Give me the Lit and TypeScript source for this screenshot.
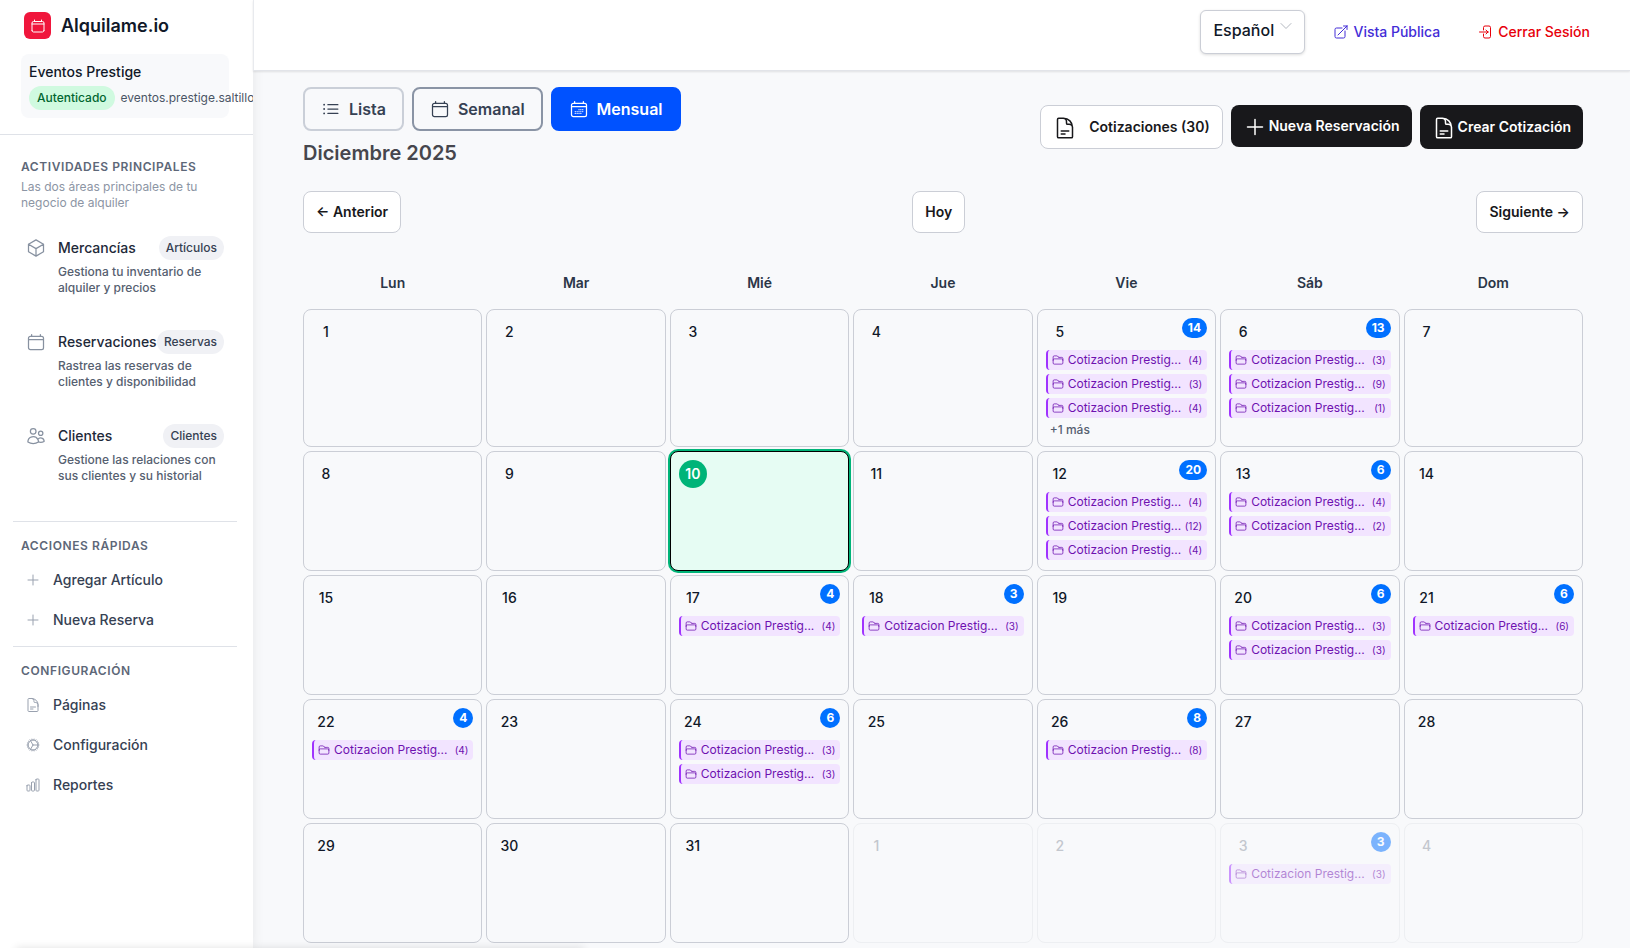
// src/app.ts
import { LitElement, html, css, svg } from 'lit';
import { customElement, property, state } from 'lit/decorators.js';
import { classMap } from 'lit/directives/class-map.js';

const ICONS: Record<string, string> = {
  cube: 'm21 7.5-9-5.25L3 7.5m18 0-9 5.25m9-5.25v9l-9 5.25M3 7.5l9 5.25M3 7.5v9l9 5.25m0-9v9',
  calendar:
    'M6.75 3v2.25M17.25 3v2.25M3 18.75V7.5a2.25 2.25 0 0 1 2.25-2.25h13.5A2.25 2.25 0 0 1 21 7.5v11.25m-18 0A2.25 2.25 0 0 0 5.25 21h13.5A2.25 2.25 0 0 0 21 18.75M3 9h18',
  days:
    'M6.75 3v2.25M17.25 3v2.25M3 18.75V7.5a2.25 2.25 0 0 1 2.25-2.25h13.5A2.25 2.25 0 0 1 21 7.5v11.25m-18 0A2.25 2.25 0 0 0 5.25 21h13.5A2.25 2.25 0 0 0 21 18.75M3 9h18M12 12.75h.01M12 15h.01M12 17.25h.01M9.75 15h.01M9.75 17.25h.01M7.5 15h.01M7.5 17.25h.01M14.25 12.75h.01M14.25 15h.01M14.25 17.25h.01M16.5 12.75h.01M16.5 15h.01',
  users:
    'M15 19.128a9.38 9.38 0 0 0 2.625.372 9.337 9.337 0 0 0 4.121-.952 4.125 4.125 0 0 0-7.533-2.493M15 19.128v-.003c0-1.113-.285-2.16-.786-3.07M15 19.128v.106A12.318 12.318 0 0 1 8.624 21c-2.331 0-4.512-.645-6.374-1.766l-.001-.109a6.375 6.375 0 0 1 11.964-3.07M12 6.375a3.375 3.375 0 1 1-6.75 0 3.375 3.375 0 0 1 6.75 0Zm8.25 2.25a2.625 2.625 0 1 1-5.25 0 2.625 2.625 0 0 1 5.25 0Z',
  plus: 'M12 4.5v15m7.5-7.5h-15',
  document:
    'M19.5 14.25v-2.625a3.375 3.375 0 0 0-3.375-3.375h-1.5A1.125 1.125 0 0 1 13.5 7.125v-1.5a3.375 3.375 0 0 0-3.375-3.375H8.25m0 12.75h7.5m-7.5 3H12M10.5 2.25H5.625c-.621 0-1.125.504-1.125 1.125v17.25c0 .621.504 1.125 1.125 1.125h12.75c.621 0 1.125-.504 1.125-1.125V11.25a9 9 0 0 0-9-9Z',
  cog:
    'M4.5 12a7.5 7.5 0 0 0 15 0m-15 0a7.5 7.5 0 1 1 15 0m-15 0H3m16.5 0H21m-1.5 0H12m-8.457 3.077 1.41-.513m14.095-5.13 1.41-.513M5.106 17.785l1.15-.964m11.49-9.642 1.149-.964M7.501 19.795l.75-1.3m7.5-12.99.75-1.3m-6.063 16.658.26-1.477m2.605-14.772.26-1.477m0 17.726-.26-1.477M10.698 4.614l-.26-1.477M16.5 19.794l-.75-1.299M7.5 4.205 12 12m6.894 5.785-1.149-.964M6.256 7.178l-1.15-.964m15.352 8.864-1.41-.513M4.954 9.435l-1.41-.514M12.002 12l-3.75 6.495',
  chart:
    'M3 13.125C3 12.504 3.504 12 4.125 12h2.25c.621 0 1.125.504 1.125 1.125v6.75C7.5 20.496 6.996 21 6.375 21h-2.25A1.125 1.125 0 0 1 3 19.875v-6.75ZM9.75 8.625c0-.621.504-1.125 1.125-1.125h2.25c.621 0 1.125.504 1.125 1.125v11.25c0 .621-.504 1.125-1.125 1.125h-2.25a1.125 1.125 0 0 1-1.125-1.125V8.625ZM16.5 4.125c0-.621.504-1.125 1.125-1.125h2.25C20.496 3 21 3.504 21 4.125v15.75c0 .621-.504 1.125-1.125 1.125h-2.25a1.125 1.125 0 0 1-1.125-1.125V4.125Z',
  list:
    'M8.25 6.75h12M8.25 12h12m-12 5.25h12M3.75 6.75h.007v.008H3.75V6.75Zm.375 0a.375.375 0 1 1-.75 0 .375.375 0 0 1 .75 0ZM3.75 12h.007v.008H3.75V12Zm.375 0a.375.375 0 1 1-.75 0 .375.375 0 0 1 .75 0Zm-.375 5.25h.007v.008H3.75v-.008Zm.375 0a.375.375 0 1 1-.75 0 .375.375 0 0 1 .75 0Z',
  folder:
    'M2.25 12.75V12A2.25 2.25 0 0 1 4.5 9.75h15A2.25 2.25 0 0 1 21.75 12v.75m-8.69-6.44-2.12-2.12a1.5 1.5 0 0 0-1.061-.44H4.5A2.25 2.25 0 0 0 2.25 6v12a2.25 2.25 0 0 0 2.25 2.25h15A2.25 2.25 0 0 0 21.75 18V9a2.25 2.25 0 0 0-2.25-2.25h-5.379a1.5 1.5 0 0 1-1.06-.44Z',
  external:
    'M13.5 6H5.25A2.25 2.25 0 0 0 3 8.25v10.5A2.25 2.25 0 0 0 5.25 21h10.5A2.25 2.25 0 0 0 18 18.75V10.5m-10.5 6L21 3m0 0h-5.25M21 3v5.25',
  logout:
    'M8.25 9V5.25A2.25 2.25 0 0 1 10.5 3h6a2.25 2.25 0 0 1 2.25 2.25v13.5A2.25 2.25 0 0 1 16.5 21h-6a2.25 2.25 0 0 1-2.25-2.25V15M12 9l3 3m0 0-3 3m3-3H2.25',
  chevron: 'm19.5 8.25-7.5 7.5-7.5-7.5',
};

const icon = (name: string, size = 16) => html`
  <svg width=${size} height=${size} viewBox="0 0 24 24" fill="none" stroke="currentColor"
    stroke-width="1.5" stroke-linecap="round" stroke-linejoin="round" aria-hidden="true">
    ${svg`<path d=${ICONS[name]}></path>`}
  </svg>`;

interface Day {
  day: number;
  events: number[];
  total?: number;
  more?: number;
  outside?: boolean;
}

// Items per quotation, keyed by day of the month
const EVENTS: Record<number, number[]> = {
  5: [4, 3, 4],
  6: [3, 9, 1],
  12: [4, 12, 4],
  13: [4, 2],
  17: [4],
  18: [3],
  20: [3, 3],
  21: [6],
  22: [4],
  24: [3, 3],
  26: [8],
};

const sum = (list: number[]) => list.reduce((a, b) => a + b, 0);

const DAYS: Day[] = [
  ...Array.from({ length: 31 }, (_, i) => {
    const day = i + 1;
    const events = EVENTS[day] ?? [];
    return day === 5
      ? { day, events, total: 14, more: 1 }
      : { day, events, total: sum(events) };
  }),
  { day: 1, events: [], outside: true },
  { day: 2, events: [], outside: true },
  { day: 3, events: [3], total: 3, outside: true },
  { day: 4, events: [], outside: true },
];

const AREAS = [
  { icon: 'cube', label: 'Mercancías', tag: 'Artículos', text: 'Gestiona tu inventario de alquiler y precios' },
  { icon: 'calendar', label: 'Reservaciones', tag: 'Reservas', text: 'Rastrea las reservas de clientes y disponibilidad' },
  { icon: 'users', label: 'Clientes', tag: 'Clientes', text: 'Gestione las relaciones con sus clientes y su historial' },
];

const QUICK = [
  { icon: 'plus', label: 'Agregar Artículo' },
  { icon: 'plus', label: 'Nueva Reserva' },
];

const SETTINGS = [
  { icon: 'document', label: 'Páginas' },
  { icon: 'cog', label: 'Configuración' },
  { icon: 'chart', label: 'Reportes' },
];

const VIEWS = [
  { id: 'list', icon: 'list', label: 'Lista' },
  { id: 'week', icon: 'calendar', label: 'Semanal' },
  { id: 'month', icon: 'days', label: 'Mensual' },
];

@customElement('side-nav')
class SideNav extends LitElement {
  static styles = css`
    :host {
      display: block;
      overflow: hidden;
      background: #fff;
      color: #101828;
      font-size: 14px;
      line-height: 20px;
    }
    svg {
      display: block;
      flex: none;
    }
    a {
      color: inherit;
      text-decoration: none;
    }
    .brand {
      display: flex;
      align-items: center;
      gap: 10px;
      padding: 12px 24px 0;
      font-size: 18px;
      font-weight: 600;
      line-height: 27px;
    }
    .logo {
      display: grid;
      place-items: center;
      width: 27px;
      height: 27px;
      border-radius: 6px;
      background: #f0163c;
      color: #fff;
    }
    .account {
      margin: 15px 24px 16px 21px;
      padding: 8px;
      border-radius: 8px;
      background: #f8f9fb;
      font-weight: 500;
    }
    .account-row {
      display: flex;
      align-items: center;
      gap: 6px;
      margin-top: 4px;
      font-size: 12px;
      line-height: 16px;
      white-space: nowrap;
    }
    .status {
      padding: 4px 8px;
      border-radius: 12px;
      background: #d0fae0;
      color: #016630;
    }
    .email {
      color: #4a5565;
      font-weight: 400;
    }
    .areas {
      padding: 24px 29px 25px 21px;
      border-top: 1px solid #dfe2e8;
    }
    h2 {
      margin: 0;
      color: #5d6778;
      font-size: 12px;
      font-weight: 600;
      line-height: 16px;
      letter-spacing: 0.05em;
      text-transform: uppercase;
    }
    .intro {
      margin: 4px 0 13px;
      color: #8c95a4;
      font-size: 12px;
      line-height: 16px;
    }
    .area {
      display: flex;
      gap: 12px;
      padding: 12px 0 12px 5px;
    }
    .area + .area {
      margin-top: 10px;
    }
    .area svg {
      margin-top: 2px;
      color: #8791a0;
    }
    .area-body {
      flex: 1;
    }
    .area-head {
      display: flex;
      align-items: center;
      justify-content: space-between;
      color: #1e2939;
      font-weight: 500;
    }
    .tag {
      padding: 4px 7px;
      border-radius: 12px;
      background: #f0f1f5;
      color: #364153;
      font-size: 12px;
      line-height: 16px;
    }
    .area p {
      margin: 4px 0 0;
      color: #566070;
      font-size: 12px;
      font-weight: 500;
      line-height: 16px;
    }
    .group {
      margin: 0 16px 0 13px;
      padding: 16px 8px 6px;
      border-top: 1px solid #dfe2e8;
    }
    .group h2 {
      margin-bottom: 6px;
    }
    .link {
      display: flex;
      align-items: center;
      gap: 12px;
      padding: 10px 4px;
      color: #364153;
      font-weight: 500;
    }
    .link svg {
      color: #99a1af;
    }
  `;

  renderGroup(title: string, links: { icon: string; label: string }[]) {
    return html`
      <section class="group">
        <h2>${title}</h2>
        ${links.map(link => html`
          <a class="link" href="#">${icon(link.icon)}<span>${link.label}</span></a>
        `)}
      </section>
    `;
  }

  render() {
    return html`
      <a class="brand" href="#">
        <span class="logo">${icon('calendar', 16)}</span>
        <span>Alquilame.io</span>
      </a>
      <div class="account">
        <div>Eventos Prestige</div>
        <div class="account-row">
          <span class="status">Autenticado</span>
          <span class="email">eventos.prestige.saltillo</span>
        </div>
      </div>
      <nav>
        <section class="areas">
          <h2>Actividades principales</h2>
          <p class="intro">Las dos áreas principales de tu negocio de alquiler</p>
          ${AREAS.map(area => html`
            <a class="area" href="#">
              ${icon(area.icon, 20)}
              <div class="area-body">
                <div class="area-head">
                  <span>${area.label}</span>
                  <span class="tag">${area.tag}</span>
                </div>
                <p>${area.text}</p>
              </div>
            </a>
          `)}
        </section>
        ${this.renderGroup('Acciones rápidas', QUICK)}
        ${this.renderGroup('Configuración', SETTINGS)}
      </nav>
    `;
  }
}

@customElement('month-calendar')
class MonthCalendar extends LitElement {
  static styles = css`
    :host {
      display: block;
      font-size: 14px;
      line-height: 20px;
    }
    .grid {
      display: grid;
      grid-template-columns: repeat(7, minmax(0, 1fr));
      gap: 4px;
    }
    .weekday {
      padding: 16px 0;
      color: #2b3647;
      font-weight: 600;
      text-align: center;
    }
    .days {
      grid-auto-rows: minmax(120px, auto);
    }
    .cell {
      box-sizing: border-box;
      padding: 8px;
      border: 1px solid #cbced6;
      border-radius: 8px;
      color: #101828;
    }
    .cell.today {
      border-color: #000;
      background: #e6fcf3;
      box-shadow: 0 0 0 2px #00b478;
    }
    .cell.outside {
      border-color: #edeff2;
      color: #c3c7ce;
    }
    .cell-head {
      display: flex;
      align-items: flex-start;
      justify-content: space-between;
    }
    .number {
      width: 28px;
      border-radius: 14px;
      font-weight: 500;
      line-height: 28px;
      text-align: center;
    }
    .today .number {
      background: #00b478;
      color: #fff;
      font-weight: 600;
    }
    .total {
      box-sizing: border-box;
      min-width: 20px;
      padding: 0 6px;
      border-radius: 10px;
      background: #0070ff;
      color: #fff;
      font-size: 12px;
      font-weight: 700;
      text-align: center;
    }
    .event {
      display: flex;
      align-items: center;
      gap: 4px;
      margin-top: 4px;
      padding: 2px 5px 2px 4px;
      border-left: 2px solid #a033ff;
      border-radius: 4px;
      background: #f2e4ff;
      color: #6e11b0;
      font-size: 12px;
      line-height: 16px;
      text-decoration: none;
      white-space: nowrap;
    }
    .event svg {
      flex: none;
    }
    .event-name {
      flex: 1;
      min-width: 0;
    }
    .count {
      font-size: 10px;
    }
    .outside .total,
    .outside .event {
      opacity: 0.5;
    }
    .more {
      margin-top: 4px;
      padding: 0 4px;
      color: #566070;
      font-size: 12px;
      font-weight: 500;
      line-height: 16px;
    }
  `;

  @property({ type: Array })
  days: Day[] = [];

  @property({ type: Number })
  today = 0;

  renderDay(d: Day) {
    const classes = { cell: true, outside: !!d.outside, today: !d.outside && d.day === this.today };
    return html`
      <div class=${classMap(classes)}>
        <div class="cell-head">
          <span class="number">${d.day}</span>
          ${d.total ? html`<span class="total">${d.total}</span>` : ''}
        </div>
        ${d.events.map(count => html`
          <a class="event" href="#">
            ${icon('folder', 12)}
            <span class="event-name">Cotizacion Prestig...</span>
            <span class="count">(${count})</span>
          </a>
        `)}
        ${d.more ? html`<div class="more">+${d.more} más</div>` : ''}
      </div>
    `;
  }

  render() {
    return html`
      <div class="grid">
        ${['Lun', 'Mar', 'Mié', 'Jue', 'Vie', 'Sáb', 'Dom'].map(name => html`
          <div class="weekday">${name}</div>
        `)}
      </div>
      <div class="grid days">${this.days.map(d => this.renderDay(d))}</div>
    `;
  }
}

@customElement('app-root')
class AppRoot extends LitElement {
  static styles = css`
    :host {
      display: grid;
      grid-template-columns: 253px minmax(0, 1fr);
      min-height: 100vh;
      background: #f8f9fb;
      font-family: Inter, 'Liberation Sans', sans-serif;
      font-size: 14px;
      line-height: 20px;
    }
    svg {
      display: block;
      flex: none;
    }
    button,
    select {
      font: inherit;
      cursor: pointer;
    }
    side-nav {
      box-shadow: 0 0 12px rgba(0, 0, 0, 0.08);
    }
    .topbar {
      position: relative;
      display: flex;
      align-items: flex-start;
      justify-content: flex-end;
      box-sizing: border-box;
      height: 71px;
      padding: 10px 40px 0 24px;
      border-left: 1px solid #e8eaee;
      border-bottom: 1px solid #e2e4e9;
      background: #fff;
      box-shadow: 0 1px 2px rgba(0, 0, 0, 0.1);
    }
    .language {
      position: relative;
    }
    .language select {
      appearance: none;
      width: 105px;
      height: 44px;
      padding: 0 28px 4px 12px;
      border: 1px solid #cbced6;
      border-radius: 6px;
      background: #fff;
      box-shadow: 0 1px 3px rgba(0, 0, 0, 0.14);
      color: #101828;
      font-size: 16px;
      font-weight: 500;
    }
    .language svg {
      position: absolute;
      top: 8px;
      right: 11px;
      color: #b3b8c0;
      pointer-events: none;
    }
    .top-link {
      display: flex;
      align-items: center;
      gap: 4px;
      margin-top: 12px;
      font-weight: 500;
      text-decoration: none;
    }
    .public {
      margin-left: 28px;
      color: #432dd7;
    }
    .logout {
      margin-left: 38px;
      color: #e7000b;
    }
    main {
      padding: 16px 47px 4px 50px;
    }
    .toolbar {
      display: flex;
      align-items: center;
      justify-content: space-between;
    }
    .views,
    .actions {
      display: flex;
      align-items: flex-start;
      gap: 8px;
    }
    .view {
      display: flex;
      align-items: center;
      gap: 8px;
      padding: 8px 16px;
      border: 2px solid #cacfd8;
      border-radius: 8px;
      background: none;
      color: #364153;
      font-size: 16px;
      font-weight: 600;
      line-height: 24px;
    }
    .view.week {
      border-color: #8a94a5;
    }
    .view.active {
      border-color: #0052ff;
      background: #0052ff;
      color: #fff;
    }
    h1 {
      margin: 8px 0 0;
      color: #46464d;
      font-size: 20px;
      font-weight: 600;
      line-height: 28px;
    }
    .button {
      display: flex;
      align-items: center;
      gap: 4px;
      box-sizing: border-box;
      height: 42px;
      padding: 0 12px;
      border: 1px solid #cbced6;
      border-radius: 8px;
      background: #fff;
      color: #18181b;
      font-weight: 600;
      white-space: nowrap;
    }
    .button svg {
      margin-top: 2px;
    }
    .button.tall {
      height: 44px;
    }
    .button.quotes {
      gap: 12px;
    }
    .button.dark {
      gap: 2px;
      border: 0;
      background: #18181b;
      color: #fff;
    }
    .pager {
      display: flex;
      justify-content: space-between;
      margin: 24px 0;
    }
    .drawer {
      position: fixed;
      bottom: -20px;
      left: 16px;
      width: 568px;
      height: 20px;
      box-shadow: 0 0 8px rgba(0, 0, 0, 0.12);
    }
  `;

  @state()
  private view = 'month';

  render() {
    return html`
      <side-nav></side-nav>
      <div>
        <header class="topbar">
          <div class="language">
            <select aria-label="Idioma">
              <option>Español</option>
              <option>English</option>
            </select>
            ${icon('chevron', 16)}
          </div>
          <a class="top-link public" href="#">${icon('external')}<span>Vista Pública</span></a>
          <a class="top-link logout" href="#">${icon('logout')}<span>Cerrar Sesión</span></a>
        </header>
        <main>
          <div class="toolbar">
            <div>
              <div class="views">
                ${VIEWS.map(v => html`
                  <button
                    class=${classMap({ view: true, [v.id]: true, active: this.view === v.id })}
                    @click=${() => (this.view = v.id)}
                  >
                    ${icon(v.icon, 20)}<span>${v.label}</span>
                  </button>
                `)}
              </div>
              <h1>Diciembre 2025</h1>
            </div>
            <div class="actions">
              <button class="button tall quotes">${icon('document', 24)}<span>Cotizaciones (30)</span></button>
              <button class="button dark">${icon('plus', 24)}<span>Nueva Reservación</span></button>
              <button class="button dark tall">${icon('document', 24)}<span>Crear Cotización</span></button>
            </div>
          </div>
          <div class="pager">
            <button class="button">← Anterior</button>
            <button class="button">Hoy</button>
            <button class="button">Siguiente →</button>
          </div>
          <month-calendar .days=${DAYS} .today=${10}></month-calendar>
        </main>
      </div>
      <div class="drawer"></div>
    `;
  }
}
